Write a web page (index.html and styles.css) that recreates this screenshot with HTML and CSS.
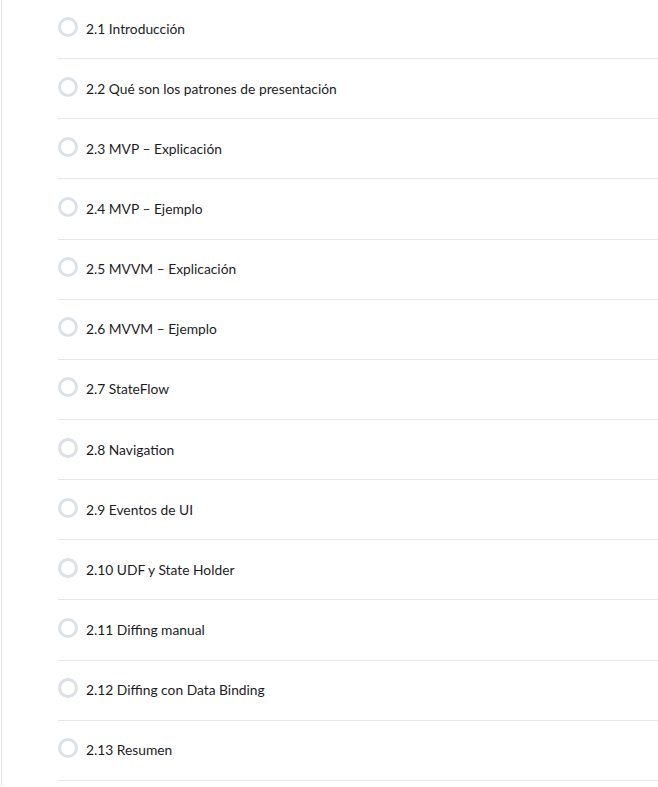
FILE: index.html
```
<!DOCTYPE html>
<html lang="es">
<head>
<meta charset="utf-8">
<link rel="stylesheet" href="styles.css">
</head>
<body>
<div class="panel">
  <ul class="lessons">
    <li class="lesson"><span class="check"></span><span class="title">2.1 Introducción</span></li>
    <li class="lesson"><span class="check"></span><span class="title">2.2 Qué son los patrones de presentación</span></li>
    <li class="lesson"><span class="check"></span><span class="title">2.3 MVP – Explicación</span></li>
    <li class="lesson"><span class="check"></span><span class="title">2.4 MVP – Ejemplo</span></li>
    <li class="lesson"><span class="check"></span><span class="title">2.5 MVVM – Explicación</span></li>
    <li class="lesson"><span class="check"></span><span class="title">2.6 MVVM – Ejemplo</span></li>
    <li class="lesson"><span class="check"></span><span class="title">2.7 StateFlow</span></li>
    <li class="lesson"><span class="check"></span><span class="title">2.8 Navigation</span></li>
    <li class="lesson"><span class="check"></span><span class="title">2.9 Eventos de UI</span></li>
    <li class="lesson"><span class="check"></span><span class="title">2.10 UDF y State Holder</span></li>
    <li class="lesson"><span class="check"></span><span class="title">2.11 Diffing manual</span></li>
    <li class="lesson"><span class="check"></span><span class="title">2.12 Diffing con Data Binding</span></li>
    <li class="lesson"><span class="check"></span><span class="title">2.13 Resumen</span></li>
  </ul>
</div>
</body>
</html>
```
FILE: styles.css
```
html, body {
  margin: 0;
  padding: 0;
  background: #ffffff;
}
body {
  font-family: Lato, "Open Sans", sans-serif;
  font-size: 13.8px;
  color: #1c1d1f;
}
.panel {
  margin-left: 1px;
  border-left: 1px solid #e4e6e9;
  min-height: 787px;
  padding-left: 56px;
}
.lessons {
  list-style: none;
  margin: -1px 0 0 0;
  padding: 0;
}
.lesson {
  box-sizing: border-box;
  height: 60.15px;
  border-bottom: 1px solid #e3e7ed;
  display: flex;
  align-items: center;
}
.check {
  box-sizing: border-box;
  flex: none;
  width: 20px;
  height: 20px;
  border: 3px solid #dce1e7;
  border-radius: 50%;
  margin-left: 0;
  margin-right: 8px;
  position: relative;
  top: -2px;
}
.title {
  line-height: 16px;
}
```
